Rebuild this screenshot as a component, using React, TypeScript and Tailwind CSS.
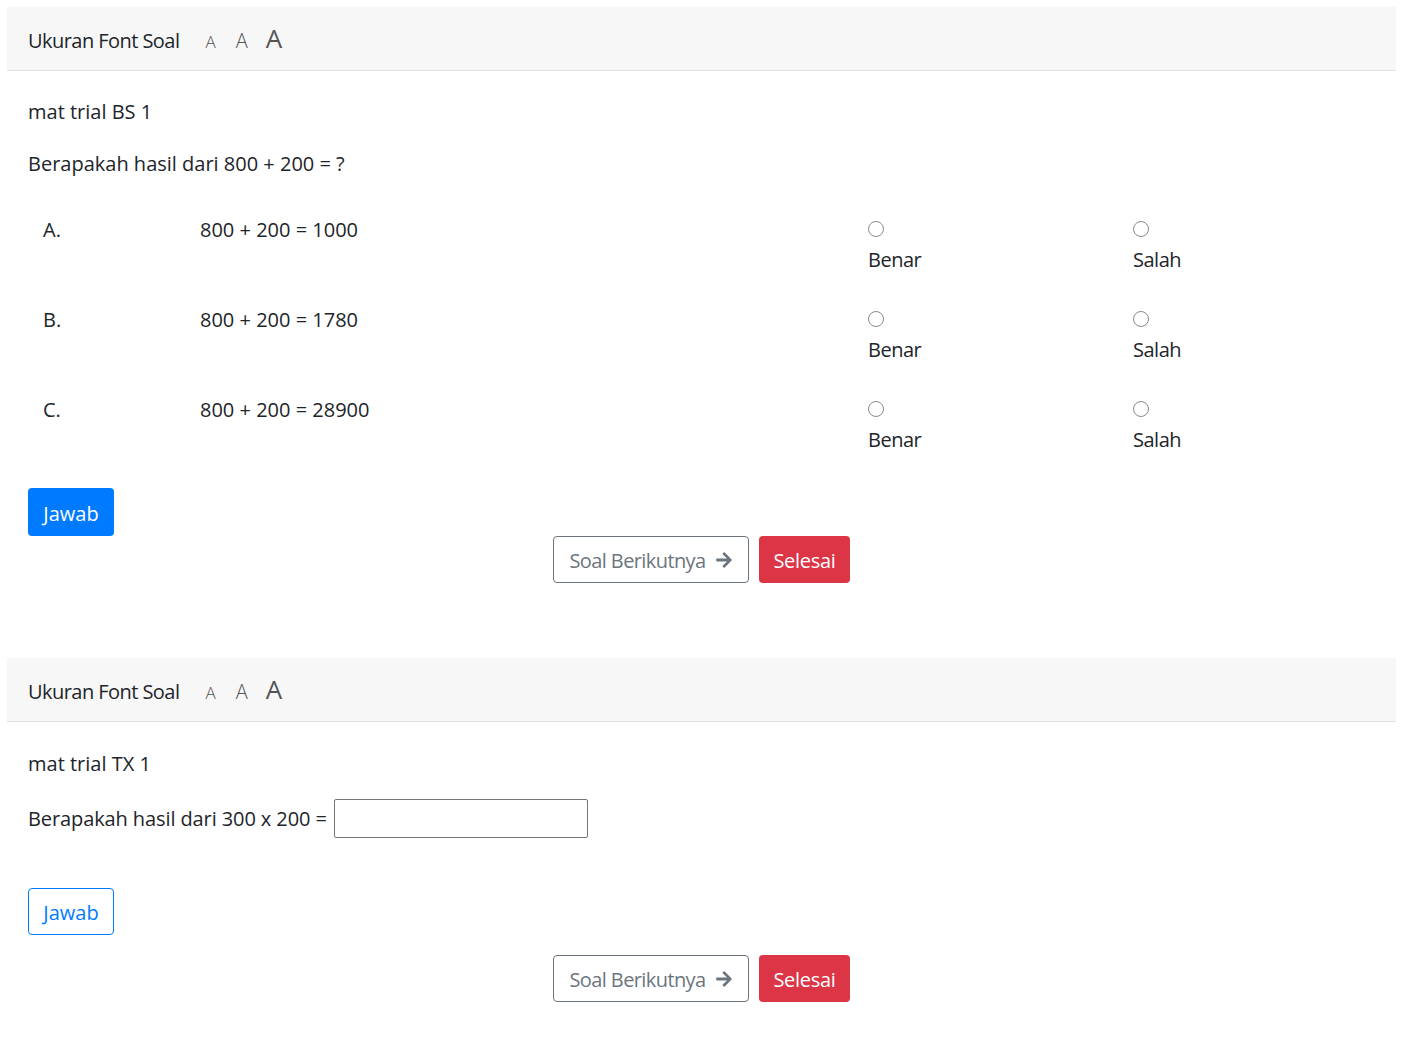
import React from "react";

const FONT = { fontFamily: '"Open Sans", "Noto Sans", Arial, sans-serif' };

function Arrow() {
  return (
    <svg viewBox="0 0 448 512" className="w-[18px] h-[18px] fill-current ml-[9px]">
      <path d="M190.5 66.9l22.2-22.2c9.4-9.4 24.6-9.4 33.9 0L441 239c9.4 9.4 9.4 24.6 0 33.9L246.6 467.3c-9.4 9.4-24.6 9.4-33.9 0l-22.2-22.2c-9.5-9.5-9.3-25 .4-34.3L311.4 296H24c-13.3 0-24-10.7-24-24v-32c0-13.3 10.7-24 24-24h287.4L190.9 101.2c-9.8-9.3-10-24.8-.4-34.3z" />
    </svg>
  );
}

function Header() {
  return (
    <div className="h-[64px] bg-[#f7f7f7] border-b border-[#dfdfdf] flex items-center pl-[21px] pb-[1px]">
      <div className="flex items-baseline">
        <span className="text-[20px] text-[#212529] tracking-[-0.55px]">Ukuran Font Soal</span>
        <span className="ml-[26px] text-[17px] font-light text-[#555]">A</span>
        <span className="ml-[20px] text-[20px] font-light text-[#555]">A</span>
        <span className="ml-[18px] text-[26px] text-[#555]">A</span>
      </div>
    </div>
  );
}

function Radio() {
  return <div className="w-[16px] h-[16px] rounded-full border border-[#8a8a8a] bg-white -mt-[3px]" />;
}

function NavButtons() {
  return (
    <div className="flex justify-center gap-[10px]">
      <button className="h-[47px] w-[196px] border border-[#6c757d] rounded-[4px] text-[#6c757d] text-[20px] flex items-center justify-center">
        <span className="tracking-[-0.6px] pt-[3px]">Soal Berikutnya</span>
        <Arrow />
      </button>
      <button className="h-[47px] w-[91px] bg-[#dc3545] rounded-[4px] text-white text-[20px] flex items-center justify-center">
        <span className="tracking-[-0.3px] pt-[3px]">Selesai</span>
      </button>
    </div>
  );
}

const rows = [
  { l: "A.", t: "800 + 200 = 1000" },
  { l: "B.", t: "800 + 200 = 1780" },
  { l: "C.", t: "800 + 200 = 28900" },
];

export default function App() {
  return (
    <div className="bg-white min-h-[1060px] pt-[7px] text-[#212529]" style={FONT}>
      <div className="ml-[7px] w-[1389px]">
        <Header />
        <div className="pl-[21px]">
          <div className="mt-[26px] h-[30px] leading-[30px] text-[20px]">mat trial BS 1</div>
          <div className="mt-[22px] h-[30px] leading-[30px] text-[20px]">Berapakah hasil dari 800 + 200 = ?</div>
          <div className="mt-[36px]">
            {rows.map((r) => (
              <div key={r.l} className="flex h-[90px] text-[20px] leading-[30px]">
                <div className="w-[172px] pl-[15px]">{r.l}</div>
                <div className="w-[668px]">{r.t}</div>
                <div className="w-[265px]">
                  <div className="h-[30px] flex items-center"><Radio /></div>
                  <div className="tracking-[-0.5px]">Benar</div>
                </div>
                <div>
                  <div className="h-[30px] flex items-center"><Radio /></div>
                  <div className="tracking-[-0.5px]">Salah</div>
                </div>
              </div>
            ))}
          </div>
          <div className="mt-[3px]">
            <button className="h-[48px] w-[86px] bg-[#007bff] rounded-[4px] text-white text-[20px] pt-[3px]">Jawab</button>
          </div>
        </div>
        <NavButtons />
      </div>

      <div className="ml-[7px] w-[1389px] mt-[75px]">
        <Header />
        <div className="pl-[21px]">
          <div className="mt-[27px] h-[30px] leading-[30px] text-[20px]">mat trial TX 1</div>
          <div className="mt-[20px] flex items-center text-[20px] h-[39px]">
            <span className="tracking-[-0.1px]">Berapakah hasil dari 300 x 200 =</span>
            <div className="ml-[7px] w-[254px] h-[39px] border border-[#767676] rounded-[2px]" />
          </div>
          <div className="mt-[50px]">
            <button className="h-[47px] w-[86px] border border-[#007bff] rounded-[4px] text-[#007bff] text-[20px] pt-[3px]">Jawab</button>
          </div>
        </div>
        <div className="mt-[20px]">
          <NavButtons />
        </div>
      </div>
    </div>
  );
}
